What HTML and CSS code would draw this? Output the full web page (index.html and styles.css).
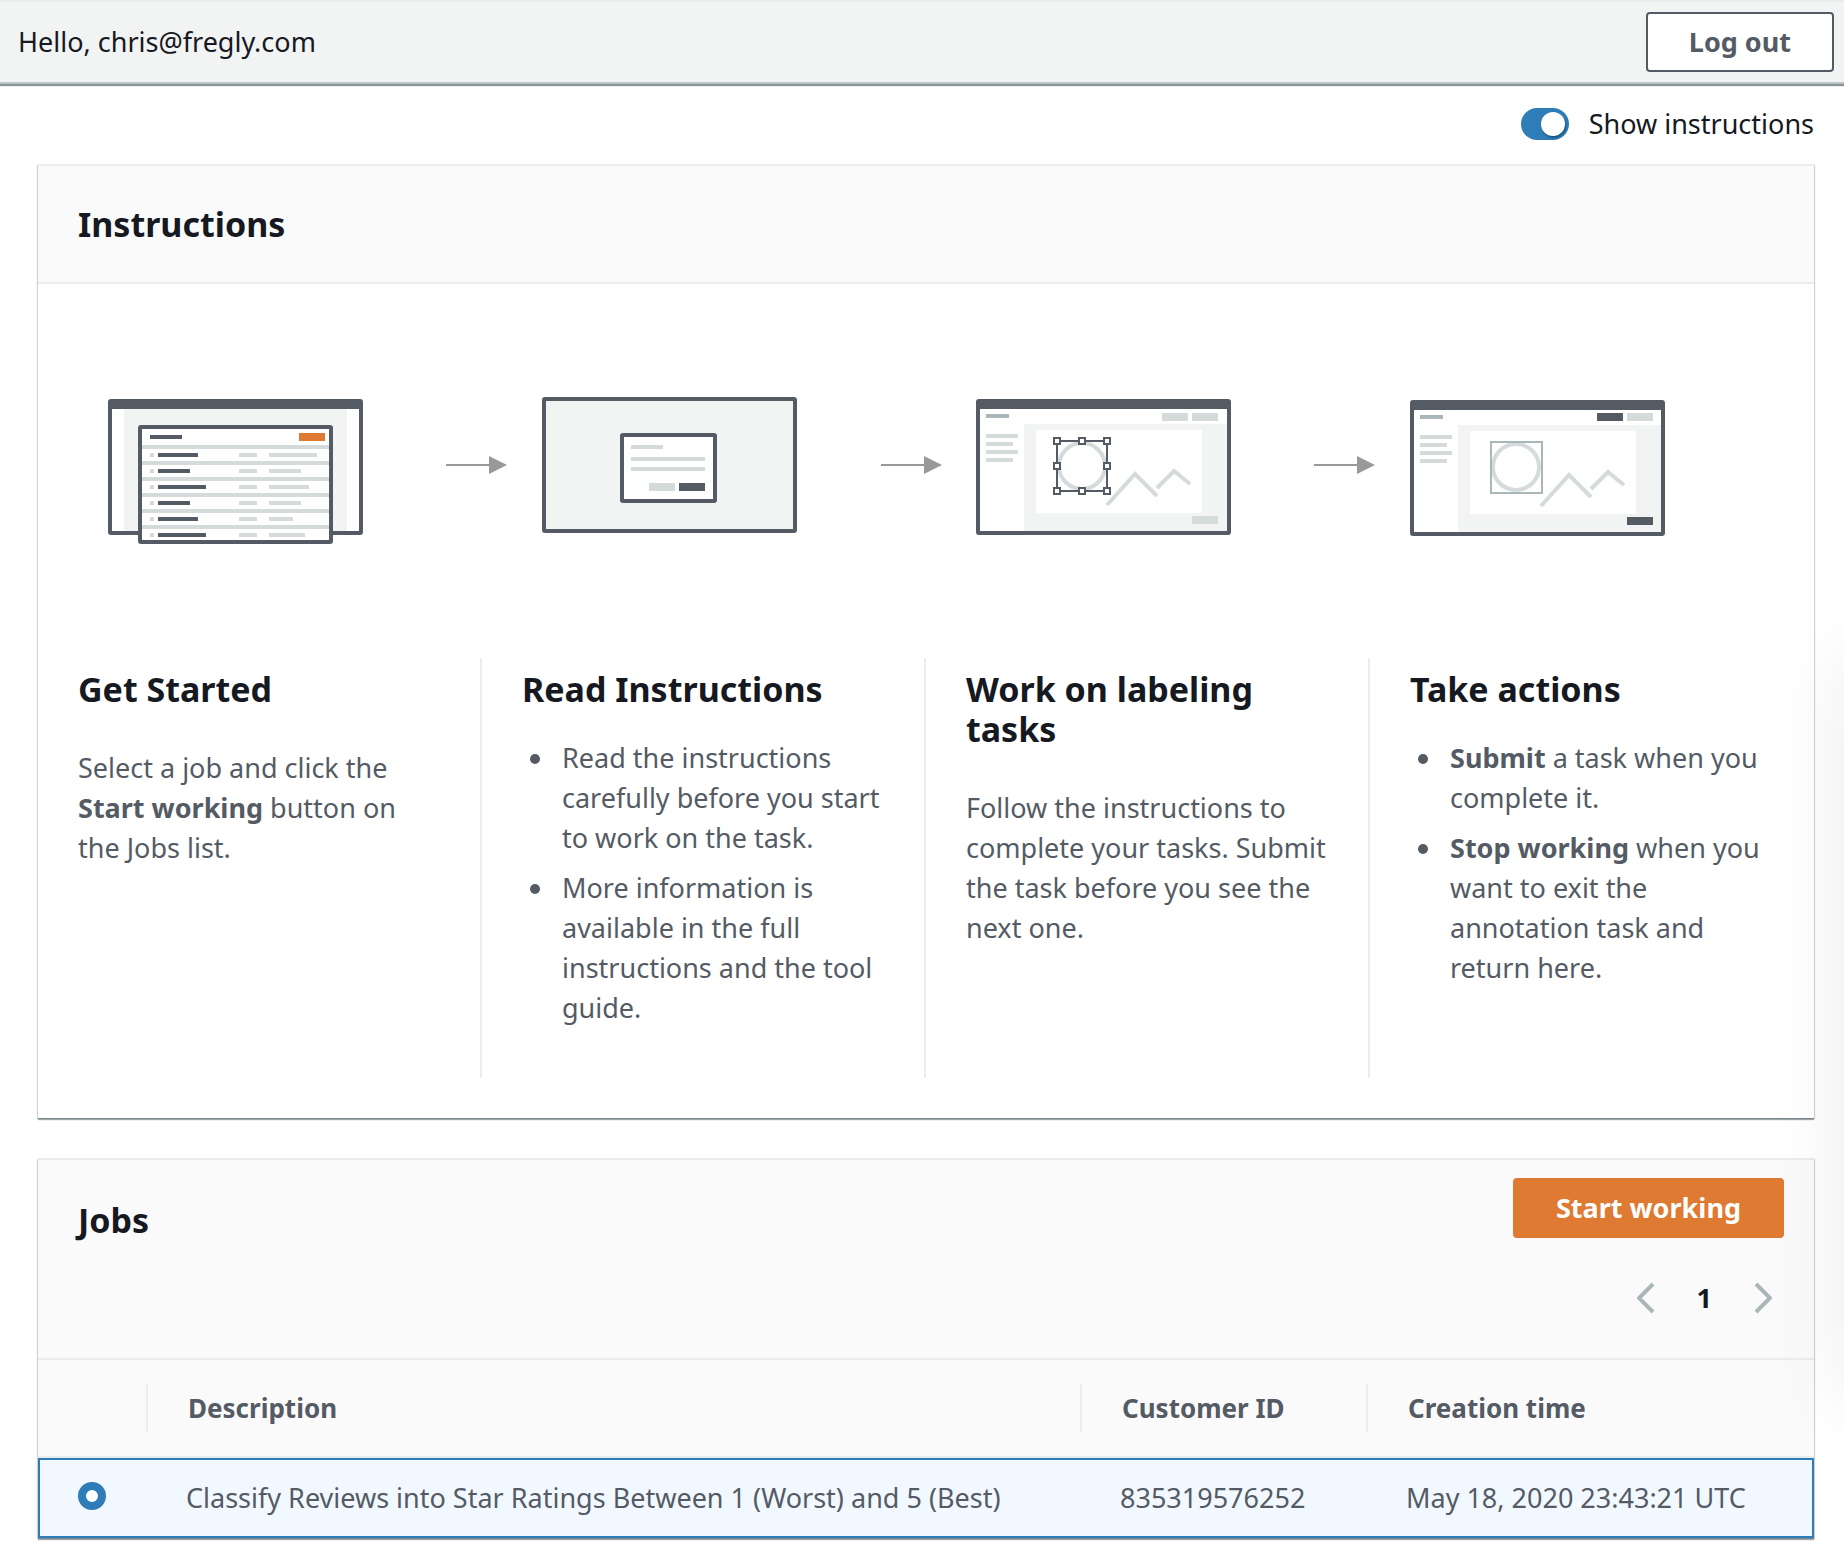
FILE: index.html
```html
<!DOCTYPE html>
<html lang="en">
<head>
<meta charset="utf-8">
<meta name="viewport" content="width=device-width, initial-scale=1">
<title>Labeling jobs</title>
<link rel="stylesheet" href="styles.css">
</head>
<body>
<header class="topbar">
  <span>Hello, chris@fregly.com</span>
  <button class="btn btn-outline" type="button">Log out</button>
</header>

<main class="page">
  <div class="toggle-row">
    <label class="toggle"><input class="switch" type="checkbox" role="switch" checked><span>Show instructions</span></label>
  </div>

  <section class="panel">
    <div class="panel-head"><h2>Instructions</h2></div>
    <svg class="steps-art" viewBox="0 0 1776 374" aria-hidden="true">
      <defs>
        <g id="arrow"><path d="M0 9H44" stroke="#999" stroke-width="2"/><path d="M43 0L61 9L43 18Z" fill="#999"/></g>
        <g id="editor">
          <rect x="2" y="2" width="251" height="132" rx="1" fill="#fff" stroke="#545b64" stroke-width="4"/>
          <rect x="2" y="2" width="251" height="8" fill="#545b64"/>
          <rect x="48" y="25" width="203" height="107" fill="#f2f3f3"/>
          <rect x="60" y="31" width="166" height="83" fill="#fff"/>
          <rect x="10" y="15" width="23" height="4" fill="#aab7b8"/>
          <path d="M10 37H42M10 45H37M10 53H42M10 61H37" stroke="#d5dbdb" stroke-width="4"/>
          <g fill="none" stroke="#d5dbdb" stroke-width="4">
            <circle cx="106" cy="67" r="23"/>
            <path d="M131 106L159 75L181 97M181 89L198 72L214 85"/>
          </g>
        </g>
        <rect id="handle" x="-3" y="-3" width="6" height="6" fill="#fff" stroke="#545b64" stroke-width="2"/>
      </defs>

      <g transform="translate(70 115)">
        <rect x="2" y="2" width="251" height="132" rx="1" fill="#fff" stroke="#545b64" stroke-width="4"/>
        <rect x="2" y="2" width="251" height="8" fill="#545b64"/>
        <rect x="16" y="10" width="223" height="122" fill="#f2f3f3"/>
        <rect x="32" y="28" width="191" height="115" rx="1" fill="#fff" stroke="#545b64" stroke-width="4"/>
        <rect x="42" y="36" width="32" height="4" fill="#545b64"/>
        <rect x="191" y="34" width="26" height="8" fill="#df7a32"/>
        <path d="M34 48H221M34 64H221M34 80H221M34 96H221M34 112H221M34 128H221" stroke="#d5dbdb" stroke-width="4"/>
        <path d="M42 56h4M42 72h4M42 88h4M42 104h4M42 120h4M42 136h4M131 56h18M131 72h18M131 88h18M131 104h18M131 120h18M131 136h18M161 56h48M161 72h32M161 88h40M161 104h32M161 120h24M161 136h36" stroke="#d5dbdb" stroke-width="4"/>
        <path d="M50 56h40M50 72h32M50 88h48M50 104h32M50 120h40M50 136h48" stroke="#545b64" stroke-width="4"/>
      </g>
      <use href="#arrow" x="408" y="172"/>

      <g transform="translate(504 113)">
        <rect x="2" y="2" width="251" height="132" rx="1" fill="#f2f3f3" stroke="#545b64" stroke-width="4"/>
        <rect x="80" y="38" width="93" height="66" rx="1" fill="#fff" stroke="#545b64" stroke-width="4"/>
        <path d="M89 50h32M89 62h74M89 72h74" stroke="#d5dbdb" stroke-width="4"/>
        <rect x="107" y="86" width="26" height="8" fill="#d5dbdb"/>
        <rect x="137" y="86" width="26" height="8" fill="#545b64"/>
      </g>
      <use href="#arrow" x="843" y="172"/>

      <g transform="translate(938 115)">
        <use href="#editor"/>
        <path d="M186 18h26M216 18h26M216 121h26" stroke="#d5dbdb" stroke-width="8"/>
        <rect x="81" y="42" width="50" height="50" fill="none" stroke="#545b64" stroke-width="2"/>
        <use href="#handle" x="81" y="42"/><use href="#handle" x="106" y="42"/><use href="#handle" x="131" y="42"/>
        <use href="#handle" x="81" y="67"/><use href="#handle" x="131" y="67"/>
        <use href="#handle" x="81" y="92"/><use href="#handle" x="106" y="92"/><use href="#handle" x="131" y="92"/>
      </g>
      <use href="#arrow" x="1276" y="172"/>

      <g transform="translate(1372 116)">
        <use href="#editor"/>
        <path d="M217 17h26" stroke="#d5dbdb" stroke-width="8"/>
        <path d="M187 17h26M217 121h26" stroke="#545b64" stroke-width="8"/>
        <rect x="81" y="42" width="51" height="51" fill="none" stroke="#aab7b8" stroke-width="2"/>
      </g>
    </svg>

    <div class="steps">
      <article class="step">
        <h2>Get Started</h2>
        <p>Select a job and click the <b>Start working</b> button on the Jobs list.</p>
      </article>
      <article class="step">
        <h2>Read Instructions</h2>
        <ul>
          <li>Read the instructions carefully before you start to work on the task.</li>
          <li>More information is available in the full instructions and the tool guide.</li>
        </ul>
      </article>
      <article class="step">
        <h2>Work on labeling tasks</h2>
        <p>Follow the instructions to complete your tasks. Submit the task before you see the next one.</p>
      </article>
      <article class="step">
        <h2>Take actions</h2>
        <ul>
          <li><b>Submit</b> a task when you complete it.</li>
          <li><b>Stop working</b> when you want to exit the annotation task and return here.</li>
        </ul>
      </article>
    </div>
  </section>

  <section class="panel">
    <div class="jobs-head">
      <h2>Jobs</h2>
      <div class="jobs-actions">
        <button class="btn btn-primary" type="button">Start working</button>
        <nav class="pager" aria-label="Pages">
          <button type="button" aria-label="Previous page"><svg width="18" height="32" viewBox="0 0 18 32"><path d="M16 2L2 16L16 30"/></svg></button>
          <button type="button" aria-current="page">1</button>
          <button type="button" aria-label="Next page"><svg width="18" height="32" viewBox="0 0 18 32"><path d="M2 2L16 16L2 30"/></svg></button>
        </nav>
      </div>
    </div>
    <table class="jobs">
      <colgroup><col class="col-pick"><col><col class="col-id"><col class="col-time"></colgroup>
      <thead>
        <tr><td></td><th scope="col"><span>Description</span></th><th scope="col"><span>Customer ID</span></th><th scope="col"><span>Creation time</span></th></tr>
      </thead>
      <tbody>
        <tr class="selected">
          <td><input class="radio" type="radio" name="job" id="job-1" checked></td>
          <td><label for="job-1">Classify Reviews into Star Ratings Between 1 (Worst) and 5 (Best)</label></td>
          <td>835319576252</td>
          <td>May 18, 2020 23:43:21 UTC</td>
        </tr>
      </tbody>
    </table>
  </section>
</main>
<div class="edge-shade"></div>
</body>
</html>
```
FILE: styles.css
```css
* { box-sizing: border-box; }

body {
  position: relative;
  margin: 0;
  overflow-x: clip;
  background: #fff;
  color: #16191f;
  font-family: "Noto Sans", "Open Sans", sans-serif;
  font-size: 27px;
  line-height: 40px;
}

h2 { margin: 0; font-size: 34px; line-height: 40px; font-weight: 700; }
p, ul { margin: 0; }

.topbar {
  display: flex;
  align-items: center;
  justify-content: space-between;
  padding: 10px 10px 10px 18px;
  background: #f2f3f3;
  border-top: 2px solid #eaeded;
  border-bottom: 2px solid #bfc3c4;
  box-shadow: 0 2px 1px #879596;
}

.btn {
  height: 60px;
  padding: 0 41px;
  border: 2px solid;
  border-radius: 4px;
  font: inherit;
  font-weight: 700;
}
.btn-outline { background: #fff; border-color: #545b64; color: #545b64; }
.btn-primary { background: #df7a32; border-color: #df7a32; color: #fff; }

.page { padding: 20px 30px 20px 38px; }

.toggle-row { display: flex; justify-content: flex-end; padding: 0 0 20px; }
.toggle { display: flex; align-items: center; gap: 20px; }
.switch {
  appearance: none;
  display: flex;
  justify-content: flex-end;
  align-items: center;
  width: 48px;
  height: 32px;
  margin: 0;
  padding: 0 4px;
  border-radius: 16px;
  background: #2f7db8;
}
.switch::before {
  content: "";
  width: 24px;
  height: 24px;
  border-radius: 50%;
  background: #fff;
  box-shadow: 1px 2px 2px rgba(0, 28, 36, .4);
}

.panel {
  border-top: 2px solid #eaeded;
  background: #fff;
  box-shadow: 0 2px 1px rgba(0, 28, 36, .35), 1px 1px 1px rgba(0, 28, 36, .15), -1px 1px 1px rgba(0, 28, 36, .15);
}
.panel + .panel { margin-top: 40px; }
.panel-head { padding: 38px 40px; background: #fafafa; border-bottom: 2px solid #eaeded; }

.steps-art { display: block; width: 100%; height: auto; }
.steps { display: grid; grid-template-columns: repeat(4, 1fr); padding-bottom: 40px; }
.step { padding: 11px 40px 50px; color: #545b64; }
.step:not(:last-child) { border-right: 2px solid #eaeded; }
.step h2 { color: #16191f; }
.step p { margin-top: 39px; }
.step ul { margin-top: 29px; padding-left: 34px; }
.step li { padding-left: 6px; }
.step li + li { margin-top: 10px; }

.jobs-head {
  display: flex;
  justify-content: space-between;
  padding: 18px 30px 40px 40px;
  background: #fafafa;
  border-bottom: 2px solid #eaeded;
}
.jobs-head h2 { padding-top: 22px; }
.jobs-actions { display: flex; flex-direction: column; align-items: flex-end; gap: 40px; }
.pager { display: flex; align-items: center; gap: 42px; padding-right: 12px; }
.pager button { display: flex; padding: 0; border: 0; background: none; color: #16191f; font: inherit; font-weight: 700; }
.pager path { fill: none; stroke: #aab7b8; stroke-width: 4; }

.jobs { width: 100%; border-collapse: separate; border-spacing: 0; table-layout: fixed; color: #545b64; text-align: left; }
.jobs th, .jobs td { padding: 0 0 0 38px; }
.col-pick { width: 110px; }
.col-id { width: 286px; }
.col-time { width: 446px; }
.jobs thead th, .jobs thead td { height: 98px; padding: 0; background: #fafafa; border-bottom: 2px solid #eaeded; font-size: 26px; }
.jobs thead span { display: block; padding-left: 40px; line-height: 48px; }
.jobs thead tr > :not(:last-child) { background: linear-gradient(#eaeded, #eaeded) right center / 2px 48px no-repeat #fafafa; }
.selected td { height: 80px; background: #f1f8ff; border: 2px solid #2f7db8; border-width: 2px 0; }
.selected td:first-child { border-left-width: 2px; }
.selected td:last-child { border-right-width: 2px; }

.radio {
  appearance: none;
  display: block;
  width: 28px;
  height: 28px;
  margin: 0 0 4px;
  border: 8px solid #2f7db8;
  border-radius: 50%;
  background: #fff;
}

/* soft shade along the right edge of the window */
.edge-shade {
  position: absolute;
  top: 660px;
  bottom: 160px;
  left: 100%;
  width: 80px;
  box-shadow: 0 0 80px rgba(0, 0, 0, .08);
  pointer-events: none;
}
```
